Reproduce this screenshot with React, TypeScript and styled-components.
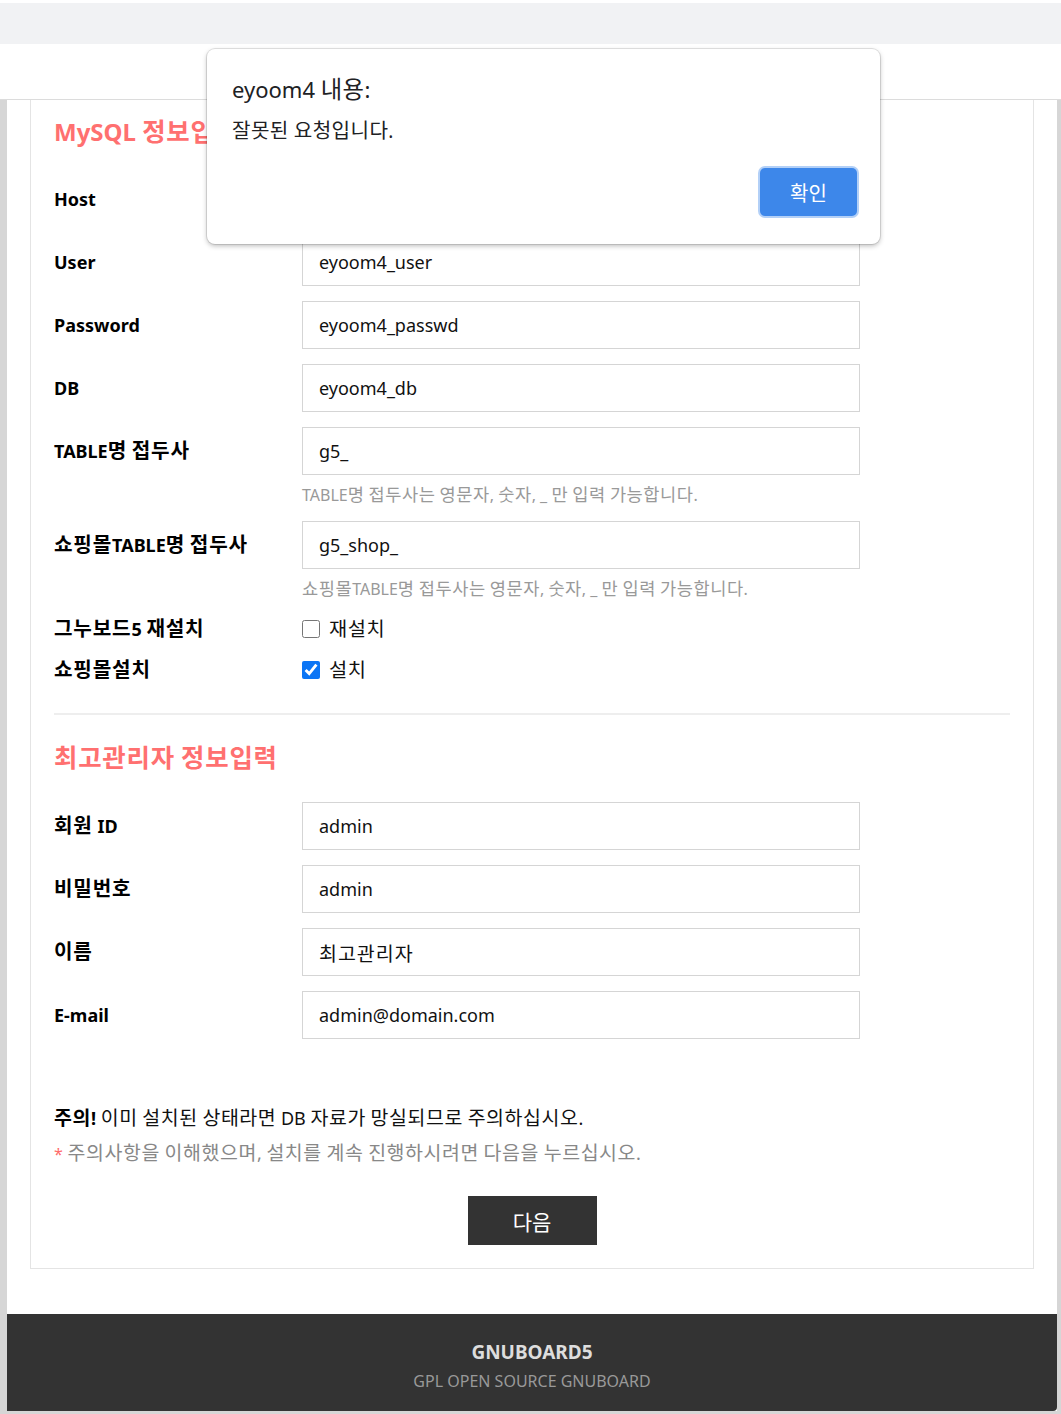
import styled, { createGlobalStyle } from "styled-components";

const GlobalStyle = createGlobalStyle`
  html, body {
    margin: 0;
    padding: 0;
    background: #ffffff;
  }
  body {
    font-family: "Noto Sans", "Noto Sans CJK KR", sans-serif;
    color: #000;
  }
  * {
    box-sizing: border-box;
  }
`;

// hangul runs are set a touch larger (the original korean face is wider)
const HANGUL = /([\uAC00-\uD7A3]+)/;
const ko = (text: string) =>
  text
    .split(HANGUL)
    .map((part, i) => (HANGUL.test(part) ? <S.Ko key={i}>{part}</S.Ko> : part));

type Field = { label: string; value: string; help?: string };

const mysqlFields: Field[] = [
  { label: "Host", value: "localhost" },
  { label: "User", value: "eyoom4_user" },
  { label: "Password", value: "eyoom4_passwd" },
  { label: "DB", value: "eyoom4_db" },
  {
    label: "TABLE명 접두사",
    value: "g5_",
    help: "TABLE명 접두사는 영문자, 숫자, _ 만 입력 가능합니다.",
  },
  {
    label: "쇼핑몰TABLE명 접두사",
    value: "g5_shop_",
    help: "쇼핑몰TABLE명 접두사는 영문자, 숫자, _ 만 입력 가능합니다.",
  },
];

const adminFields: Field[] = [
  { label: "회원 ID", value: "admin" },
  { label: "비밀번호", value: "admin" },
  { label: "이름", value: "최고관리자" },
  { label: "E-mail", value: "admin@domain.com" },
];

const FormRows = (props: { fields: Field[]; top: number }) => (
  <S.Form $top={props.top}>
    {props.fields.map((f) => (
      <S.Row key={f.label}>
        <S.Label>{ko(f.label)}</S.Label>
        <div>
          <S.Input value={f.value} readOnly $ko={HANGUL.test(f.value)} />
          {f.help && <S.Help>{ko(f.help)}</S.Help>}
        </div>
      </S.Row>
    ))}
  </S.Form>
);

const App = () => {
  return (
    <S.Page>
      <GlobalStyle />
      <S.TopBar />
      <S.Header />

      <S.Wrapper>
        <S.Panel>
          <S.Card>
            <S.Title>{ko("MySQL 정보입력")}</S.Title>
            <FormRows fields={mysqlFields} top={26} />

            <S.CheckRow $first>
              <S.Label $compact>{ko("그누보드5 재설치")}</S.Label>
              <S.CheckLabel>
                <S.Checkbox type="checkbox" readOnly />
                {ko("재설치")}
              </S.CheckLabel>
            </S.CheckRow>
            <S.CheckRow>
              <S.Label $compact>{ko("쇼핑몰설치")}</S.Label>
              <S.CheckLabel>
                <S.Checkbox type="checkbox" checked readOnly />
                {ko("설치")}
              </S.CheckLabel>
            </S.CheckRow>

            <S.Divider />

            <S.Title $second>{ko("최고관리자 정보입력")}</S.Title>
            <FormRows fields={adminFields} top={27} />

            <S.Notice>
              <strong>{ko("주의")}!</strong> {ko("이미 설치된 상태라면 DB 자료가 망실되므로 주의하십시오.")}
            </S.Notice>
            <S.SubNotice>
              <span className="star">*</span>{" "}
              {ko("주의사항을 이해했으며, 설치를 계속 진행하시려면 다음을 누르십시오.")}
            </S.SubNotice>

            <S.ButtonBox>
              <S.NextButton>다음</S.NextButton>
            </S.ButtonBox>
          </S.Card>

          <S.Footer>
            <div className="brand">GNUBOARD5</div>
            <div className="sub">GPL OPEN SOURCE GNUBOARD</div>
          </S.Footer>
        </S.Panel>
      </S.Wrapper>

      {/* browser alert dialog on top of the page */}
      <S.Dialog>
        <div className="dialog-title">eyoom4 {ko("내용")}:</div>
        <div className="dialog-message">{ko("잘못된 요청입니다.")}</div>
        <div className="dialog-actions">
          <S.OkButton>확인</S.OkButton>
        </div>
      </S.Dialog>
    </S.Page>
  );
};

export default App;

const S = {
  Page: styled.div`
    position: relative;
    width: 1061px;
    --ko-fs: 1.1em;
    --ko-ls: 0.03em;
  `,
  Ko: styled.span`
    font-size: var(--ko-fs);
    letter-spacing: var(--ko-ls);
    line-height: 1;
  `,
  TopBar: styled.div`
    margin-top: 3px;
    height: 41px;
    background: #f1f2f4;
  `,
  Header: styled.div`
    height: 56px;
    background: #fff;
    border-bottom: 1px solid #dcdcdc;
  `,
  Wrapper: styled.div`
    background: #d6d6d6;
    padding: 0 4px 3px 7px;
  `,
  Panel: styled.div`
    background: #fff;
  `,
  Card: styled.div`
    margin: 0 23px 45px;
    border: 1px solid #e4e4e4;
    border-top: none;
    padding: 15px 23px 23px;
  `,
  Title: styled.h2<{ $second?: boolean }>`
    --ko-fs: 1.06em;
    --ko-ls: 0.03em;
    margin: ${({ $second }) => ($second ? "26px 0 0" : "0")};
    font-size: 24px;
    line-height: 34px;
    font-weight: 700;
    color: #ff7070;
  `,
  Form: styled.div<{ $top: number }>`
    margin-top: ${({ $top }) => $top}px;
    display: flex;
    flex-direction: column;
    gap: 15px;
  `,
  Row: styled.div`
    display: grid;
    grid-template-columns: 248px 558px;
    align-items: start;
  `,
  Label: styled.div<{ $compact?: boolean }>`
    --ko-fs: 1.12em;
    --ko-ls: 0.04em;
    font-size: 18px;
    font-weight: 700;
    line-height: ${({ $compact }) => ($compact ? "28px" : "48px")};
    color: #000;
  `,
  Input: styled.input<{ $ko?: boolean }>`
    display: block;
    width: 100%;
    height: 48px;
    border: 1px solid #d5d5d5;
    border-radius: 0;
    padding: 0 16px;
    font-family: "Noto Sans", "Noto Sans CJK KR", sans-serif;
    font-size: ${({ $ko }) => ($ko ? "19.5px" : "18px")};
    letter-spacing: ${({ $ko }) => ($ko ? "0.05em" : "normal")};
    color: #111;
    background: #fff;
    outline: none;
  `,
  Help: styled.p`
    margin: 9px 0 0;
    font-size: 16px;
    line-height: 22px;
    color: #999;
  `,
  CheckRow: styled.div<{ $first?: boolean }>`
    margin-top: ${({ $first }) => ($first ? "15px" : "13px")};
    display: grid;
    grid-template-columns: 248px 558px;
    align-items: center;
  `,
  CheckLabel: styled.label`
    display: flex;
    align-items: center;
    gap: 9px;
    font-size: 18px;
    line-height: 28px;
    color: #111;
  `,
  Checkbox: styled.input`
    width: 18px;
    height: 18px;
    margin: 0;
    accent-color: #0b75f5;
  `,
  Divider: styled.hr`
    margin: 29px 0 0;
    border: none;
    height: 2px;
    background: #eeeeee;
  `,
  Notice: styled.p`
    --ko-fs: 1.08em;
    margin: 66px 0 0;
    font-size: 18px;
    line-height: 26px;
    color: #111;
    strong {
      font-weight: 700;
      color: #000;
    }
  `,
  SubNotice: styled.p`
    --ko-fs: 1.08em;
    margin: 9px 0 0;
    font-size: 18px;
    line-height: 26px;
    color: #888;
    .star {
      color: #ff6b6b;
      font-size: 16px;
    }
  `,
  ButtonBox: styled.div`
    margin-top: 29px;
    display: flex;
    justify-content: center;
  `,
  NextButton: styled.button`
    width: 129px;
    height: 49px;
    border: none;
    background: #333;
    color: #fff;
    font-family: "Noto Sans CJK KR", sans-serif;
    font-size: 21px;
    cursor: pointer;
  `,
  Footer: styled.div`
    background: #333;
    height: 97px;
    padding-top: 26px;
    text-align: center;
    border-bottom-right-radius: 4px;

    .brand {
      font-size: 19px;
      line-height: 24px;
      font-weight: 700;
      color: #ddd;
    }
    .sub {
      margin-top: 6px;
      font-size: 16px;
      line-height: 22px;
      color: #999;
    }
  `,
  Dialog: styled.div`
    --ko-fs: 1.06em;
    --ko-ls: 0.02em;
    position: absolute;
    left: 207px;
    top: 46px;
    width: 673px;
    height: 195px;
    background: #fff;
    border-radius: 8px;
    box-shadow: 0 2px 5px rgba(0, 0, 0, 0.26), 0 0 0 1px rgba(0, 0, 0, 0.1);
    padding: 26px 23px 0 25px;
    font-family: "Noto Sans", "Noto Sans CJK KR", sans-serif;

    .dialog-title {
      font-size: 22px;
      line-height: 28px;
      color: #202124;
    }
    .dialog-message {
      margin-top: 14px;
      font-size: 19px;
      line-height: 28px;
      color: #202124;
    }
    .dialog-actions {
      margin-top: 23px;
      display: flex;
      justify-content: flex-end;
    }
  `,
  OkButton: styled.button`
    width: 97px;
    height: 48px;
    border-radius: 5px;
    border: none;
    background: #3d87ea;
    box-shadow: 0 0 0 2px #b3d0f7;
    color: #fff;
    font-family: "Noto Sans CJK KR", sans-serif;
    font-size: 20px;
  `,
};
